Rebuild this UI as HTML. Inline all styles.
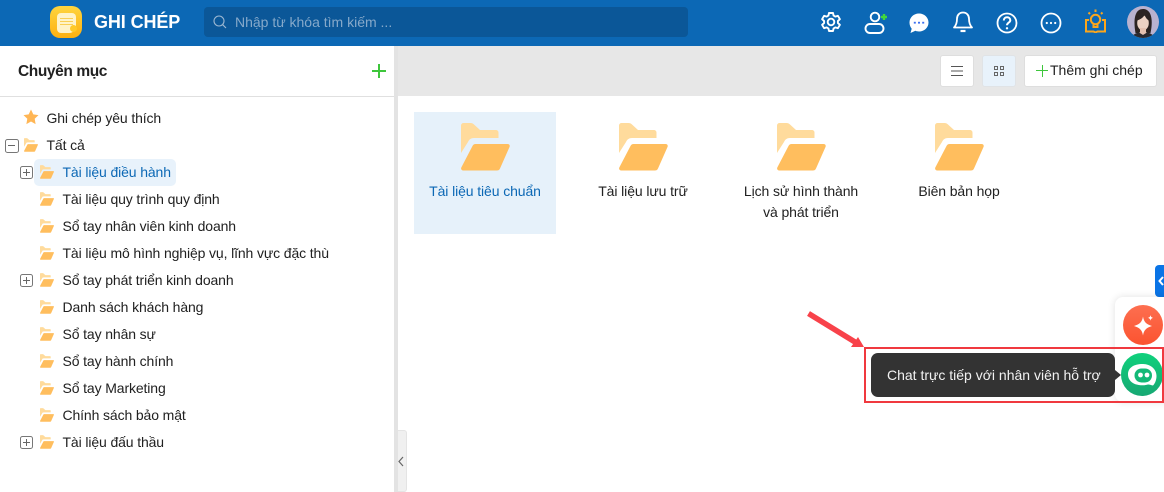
<!DOCTYPE html>
<html><head><meta charset="utf-8"><style>
*{box-sizing:border-box}
html,body{margin:0;padding:0}
body{width:1164px;height:492px;overflow:hidden;position:relative;background:#fff;font-family:"Liberation Sans","Noto Sans CJK SC",sans-serif;font-size:14px;color:#212121}
.a{position:absolute}
.t{position:absolute;white-space:nowrap;line-height:20px}
.l{letter-spacing:-.12px}
.c{position:absolute;text-align:center;line-height:21px;font-size:14px;color:#212121;letter-spacing:-.1px}
.b{position:absolute;width:13px;height:13px;border:1px solid #777;border-radius:2.5px}
.b:before{content:"";position:absolute;left:2px;top:5px;width:7px;height:1px;background:#666}
.p:after{content:"";position:absolute;left:5px;top:2px;width:1px;height:7px;background:#666}
</style></head><body>
<svg width="0" height="0" style="position:absolute"><defs>
<symbol id="f" viewBox="0 0 49 48"><path d="M0 2.500A2.500 2.500 0 0 1 2.500 0H9.500c1.500 0 2.500.5 3.500 1.500L19 7H35a2.500 2.500 0 0 1 2.500 2.500V15H13c-3 0-5 1.500-6 4L0 30Z" fill="#ffdb9c"/><path d="M11.500 23c.6-1.300 1.700-2 3-2H46.500c1.800 0 2.700 1.400 2 3L39 45.500c-.7 1.500-1.700 2-3.200 2H2.300C.6 47.500-.4 46 .3 44.500Z" fill="#ffbe5e"/></symbol>
</defs></svg>

<div class="a" style="left:0;top:0;width:1164px;height:46px;background:#0c68b5"></div>
<div class="a" style="left:50px;top:6px;width:32px;height:32px;border-radius:10px;background:linear-gradient(#ffd53f,#fdb010)"></div>
<div class="a" style="left:57px;top:13px;width:19px;height:20px;border-radius:4px 4px 7px 4px;background:#fff3c8"></div>
<div class="a" style="left:60px;top:18px;width:13px;height:1px;background:#f9cf55;box-shadow:0 3px #f9cf55,0 6px #f9cf55"></div>
<div class="a" style="left:70px;top:25px;width:7px;height:7px;border-radius:50%;background:#ffc928"></div>
<div class="t" style="left:94px;top:11px;color:#fff;font-size:18px;line-height:22px;font-weight:bold;letter-spacing:-.1px">GHI CHÉP</div>
<div class="a" style="left:204px;top:7px;width:484px;height:30px;border-radius:4px;background:#0b5798"></div>
<svg class="a" style="left:213px;top:15px" width="14" height="14" viewBox="0 0 14 14" fill="none" stroke="#9db8d2" stroke-width="1.100"><circle cx="6" cy="6" r="5"/><path d="M9.800 9.800L13 13"/></svg>
<div class="t" style="left:235px;top:12px;color:#86a9ca;font-size:14px">Nhập từ khóa tìm kiếm ...</div>

<svg class="a" style="left:820px;top:11px" width="22" height="22" viewBox="0 0 22 22" fill="none" stroke="#fff" stroke-width="1.900" stroke-linejoin="round"><path d="M9 2h4l.6 2.600 1.700 1 2.600-.8 2 3.400-2 1.800v2l2 1.800-2 3.400-2.600-.8-1.700 1-.6 2.600H9l-.6-2.600-1.700-1-2.600.8-2-3.400 2-1.800v-2l-2-1.800 2-3.400 2.600.8 1.700-1Z"/><circle cx="11" cy="11" r="3.300"/></svg>
<svg class="a" style="left:863px;top:10px" width="26" height="24" viewBox="0 0 26 24" fill="none"><circle cx="12" cy="7" r="4.300" stroke="#fff" stroke-width="1.900"/><rect x="2.500" y="14" width="18" height="9" rx="4.500" stroke="#fff" stroke-width="1.900"/><path d="M21 4v6M18 7h6" stroke="#41d63c" stroke-width="2.400"/></svg>
<svg class="a" style="left:908px;top:12px" width="22" height="23" viewBox="0 0 22 23"><path d="M11 1.500c5.400 0 9.500 4 9.500 9s-4.100 9-9.500 9c-1.300 0-2.500-.2-3.600-.7L2.500 21l1.200-4.300C2.300 15 1.500 12.900 1.500 10.500c0-5 4.100-9 9.500-9Z" fill="#fff"/><rect x="5.800" y="9.800" width="2" height="1.800" fill="#3b6ff0"/><rect x="10" y="9.800" width="2" height="1.800" fill="#3b6ff0"/><rect x="14.200" y="9.800" width="2" height="1.800" fill="#3b6ff0"/></svg>
<svg class="a" style="left:952px;top:11px" width="22" height="23" viewBox="0 0 22 23" fill="none" stroke="#fff" stroke-width="1.800" stroke-linejoin="round"><path d="M11 1.500c-3.800 0-6 2.800-6 6.300 0 5-1.300 7-3 8.700h18c-1.700-1.700-3-3.700-3-8.700 0-3.500-2.200-6.300-6-6.300Z"/><path d="M8.500 20h5" stroke-width="2.200"/></svg>
<svg class="a" style="left:996px;top:12px" width="22" height="22" viewBox="0 0 22 22" fill="none" stroke="#fff" stroke-width="1.800"><circle cx="11" cy="11" r="9.500"/><path d="M7.800 8.500c0-2 1.500-3.200 3.300-3.200s3.200 1.200 3.200 2.900c0 2.400-3.300 2.500-3.300 5" stroke-width="2"/><circle cx="11" cy="16.300" r="1.200" fill="#fff" stroke="none"/></svg>
<svg class="a" style="left:1040px;top:12px" width="22" height="22" viewBox="0 0 22 22" fill="none" stroke="#fff" stroke-width="1.800"><circle cx="11" cy="11" r="9.500"/><circle cx="6.800" cy="11" r="1.100" fill="#fff" stroke="none"/><circle cx="11" cy="11" r="1.100" fill="#fff" stroke="none"/><circle cx="15.200" cy="11" r="1.100" fill="#fff" stroke="none"/></svg>
<svg class="a" style="left:1085px;top:9px" width="21" height="24" viewBox="0 0 21 24" fill="none" stroke="#fba61c" stroke-width="2"><path d="M4 11H1v11.500h7.500l2 1 2-1H20V11h-3"/><circle cx="10.500" cy="10.500" r="4.700"/><path d="M8.500 15v3h4v-3M10.500 .5v2.500M3.500 3.500L5 5M17.500 3.500L16 5"/></svg>
<svg class="a" style="left:1127px;top:6px" width="32" height="32" viewBox="0 0 32 32"><defs><clipPath id="av"><circle cx="16" cy="16" r="16"/></clipPath></defs><g clip-path="url(#av)"><rect width="32" height="32" fill="#b9b2cf"/><path d="M8.500 27C6 13 8 3 16 3s10.500 10 7.500 24Z" fill="#2b2322"/><ellipse cx="16" cy="17" rx="5.800" ry="7.500" fill="#ecd2c4"/><path d="M10 14.500c3-1 6-2.500 7.500-5.500 1 2.500 2.500 4.500 4.500 5.500l-.5-7-5.500-2-5 2.500Z" fill="#2b2322"/><path d="M13 22h6v4l3 2.500H10l3-2.500Z" fill="#e4c1b0"/><path d="M4 32c1-3 5-5 8-5.500l4 2.500 4-2.500c3 .5 7 2.500 8 5.500Z" fill="#2a2a30"/></g></svg>

<!-- sidebar -->
<div class="t" style="left:18px;top:62px;font-size:15.500px;font-weight:bold;color:#212121;letter-spacing:-.4px">Chuyên mục</div>
<div class="a" style="left:372px;top:70px;width:14px;height:2px;background:#3ec63c"></div>
<div class="a" style="left:378px;top:64px;width:2px;height:14px;background:#3ec63c"></div>
<div class="a" style="left:0;top:96px;width:394px;height:1px;background:#e0e0e0"></div>
<div class="a" style="left:394px;top:46px;width:4px;height:446px;background:#e3e3e3"></div>
<div class="a" style="left:398px;top:46px;width:766px;height:50px;background:#e7e7e7"></div>

<svg class="a" style="left:23px;top:109px" width="16" height="16" viewBox="0 0 16 16"><path d="M8 .5l2.300 4.900 5.200.7-3.800 3.700.9 5.300L8 12.500l-4.600 2.600.9-5.300L.5 6.100l5.200-.7Z" fill="#ffb655"/></svg>
<div class="t l" style="left:46.500px;top:108px">Ghi chép yêu thích</div>

<div class="b" style="left:5px;top:139px;width:14px;height:14px"></div>
<svg class="a" style="left:24px;top:138px" width="14" height="14"><use href="#f"/></svg>
<div class="t l" style="left:46.500px;top:135px">Tất cả</div>

<div class="a" style="left:34px;top:159px;width:142px;height:27px;border-radius:5px;background:#e8f2fb"></div>
<div class="b p" style="left:20px;top:166px"></div>
<svg class="a" style="left:40px;top:165px" width="14" height="14"><use href="#f"/></svg>
<div class="t l" style="left:62.500px;top:162px;color:#0c68b5">Tài liệu điều hành</div>

<svg class="a" style="left:40px;top:192px" width="14" height="14"><use href="#f"/></svg>
<div class="t l" style="left:62.500px;top:189px">Tài liệu quy trình quy định</div>
<svg class="a" style="left:40px;top:219px" width="14" height="14"><use href="#f"/></svg>
<div class="t l" style="left:62.500px;top:216px">Sổ tay nhân viên kinh doanh</div>
<svg class="a" style="left:40px;top:246px" width="14" height="14"><use href="#f"/></svg>
<div class="t l" style="left:62.500px;top:243px">Tài liệu mô hình nghiệp vụ, lĩnh vực đặc thù</div>
<div class="b p" style="left:20px;top:274px"></div>
<svg class="a" style="left:40px;top:273px" width="14" height="14"><use href="#f"/></svg>
<div class="t l" style="left:62.500px;top:270px">Sổ tay phát triển kinh doanh</div>
<svg class="a" style="left:40px;top:300px" width="14" height="14"><use href="#f"/></svg>
<div class="t l" style="left:62.500px;top:297px">Danh sách khách hàng</div>
<svg class="a" style="left:40px;top:327px" width="14" height="14"><use href="#f"/></svg>
<div class="t l" style="left:62.500px;top:324px">Sổ tay nhân sự</div>
<svg class="a" style="left:40px;top:354px" width="14" height="14"><use href="#f"/></svg>
<div class="t l" style="left:62.500px;top:351px">Sổ tay hành chính</div>
<svg class="a" style="left:40px;top:381px" width="14" height="14"><use href="#f"/></svg>
<div class="t l" style="left:62.500px;top:378px">Sổ tay Marketing</div>
<svg class="a" style="left:40px;top:408px" width="14" height="14"><use href="#f"/></svg>
<div class="t l" style="left:62.500px;top:405px">Chính sách bảo mật</div>
<div class="b p" style="left:20px;top:436px"></div>
<svg class="a" style="left:40px;top:435px" width="14" height="14"><use href="#f"/></svg>
<div class="t l" style="left:62.500px;top:432px">Tài liệu đấu thầu</div>

<div class="a" style="left:398px;top:430px;width:9px;height:62px;background:#f0f0f0;border:1px solid #e4e4e4;border-left:0;border-radius:0 3px 3px 0"></div>
<svg class="a" style="left:397px;top:456px" width="8" height="11" viewBox="0 0 8 11" fill="none" stroke="#666" stroke-width="1.200"><path d="M6 1L2 5.500 6 10"/></svg>

<!-- toolbar -->
<div class="a" style="left:940px;top:55px;width:34px;height:32px;background:#fff;border:1px solid #dedede;border-radius:3px"></div>
<div class="a" style="left:951px;top:66px;width:12px;height:1px;background:#555;box-shadow:0 4.500px #555,0 9px #555"></div>
<div class="a" style="left:982px;top:55px;width:34px;height:32px;background:#e8f2fb;border:1px solid #e0e3e6;border-radius:3px"></div>
<svg class="a" style="left:994px;top:66px" width="10" height="10" fill="none" stroke="#666"><rect x=".5" y=".5" width="3" height="3"/><rect x="6.500" y=".5" width="3" height="3"/><rect x=".5" y="6.500" width="3" height="3"/><rect x="6.500" y="6.500" width="3" height="3"/></svg>
<div class="a" style="left:1024px;top:55px;width:133px;height:32px;background:#fff;border:1px solid #dedede;border-radius:3px"></div>
<div class="a" style="left:1036px;top:70px;width:12px;height:1px;background:#3ec63c"></div>
<div class="a" style="left:1041.500px;top:64.500px;width:1px;height:12px;background:#3ec63c"></div>
<div class="t" style="left:1050px;top:60px;color:#212121">Thêm ghi chép</div>

<!-- folders -->
<div class="a" style="left:414px;top:112px;width:142px;height:122px;background:#e6f1fa"></div>
<svg class="a" style="left:461px;top:123px" width="49" height="48"><use href="#f"/></svg>
<svg class="a" style="left:619px;top:123px" width="49" height="48"><use href="#f"/></svg>
<svg class="a" style="left:777px;top:123px" width="49" height="48"><use href="#f"/></svg>
<svg class="a" style="left:935px;top:123px" width="49" height="48"><use href="#f"/></svg>
<div class="c" style="left:414px;top:181px;width:142px;color:#0c68b5">Tài liệu tiêu chuẩn</div>
<div class="c" style="left:572px;top:181px;width:142px">Tài liệu lưu trữ</div>
<div class="c" style="left:730px;top:181px;width:142px">Lịch sử hình thành<br>và phát triển</div>
<div class="c" style="left:888px;top:181px;width:142px">Biên bản họp</div>

<!-- right widgets -->
<div class="a" style="left:1155px;top:265px;width:15px;height:32px;background:#0a74e6;border-radius:4px 0 0 4px"></div>
<svg class="a" style="left:1158px;top:276px" width="6" height="10" fill="none" stroke="#fff" stroke-width="2"><path d="M5 1L1.500 5 5 9"/></svg>
<div class="a" style="left:1115px;top:297px;width:60px;height:105px;background:#fff;border-radius:8px 0 0 8px;box-shadow:0 0 8px rgba(0,0,0,.12)"></div>
<div class="a" style="left:1123px;top:305px;width:40px;height:40px;border-radius:50%;background:linear-gradient(#fd6f50,#fb5330)"></div>
<svg class="a" style="left:1133px;top:315px" width="22" height="22" viewBox="0 0 22 22" fill="#fff"><path d="M10 1.500c.9 5.500 3 7.500 9 9.500-6 2-8.100 4-9 9.500-.9-5.500-3-7.500-9-9.500 6-2 8.100-4 9-9.500Z"/><path d="M17.500 0c.3 1.800 1 2.500 2.700 2.900-1.700.4-2.400 1.100-2.700 2.900-.3-1.800-1-2.500-2.700-2.900C16.500 2.500 17.200 1.800 17.500 0Z"/></svg>
<div class="a" style="left:1121px;top:353px;width:42px;height:43px;border-radius:50%;background:linear-gradient(#0fd17c,#17a873)"></div>
<svg class="a" style="left:1127px;top:362px" width="32" height="30" viewBox="0 0 32 30"><path d="M15.500 2c8 0 14 5 14 12 0 4-1.500 7.500-3.500 9.500-2-.3-3.500-1.200-5-1-1.500.5-3.500.8-5.500.8-8.500 0-14.500-4-14.500-11S7.500 2 15.500 2Z" fill="#fff"/><rect x="7.500" y="6.500" width="17.500" height="14" rx="7" fill="#13b977"/><circle cx="13.500" cy="13" r="2.400" fill="#fff"/><circle cx="20" cy="13" r="2.400" fill="#fff"/></svg>
<div class="a" style="left:871px;top:353px;width:244px;height:44px;background:#333;border-radius:7px"></div>
<div class="a" style="left:1115px;top:370px;width:0;height:0;border-left:6px solid #333;border-top:5px solid transparent;border-bottom:5px solid transparent"></div>
<div class="t" style="left:887px;top:365px;color:#f2f2f2;font-size:14px">Chat trực tiếp với nhân viên hỗ trợ</div>

<!-- annotation -->
<div class="a" style="left:864px;top:347px;width:300px;height:56px;border:2px solid #f0393f"></div>
<svg class="a" style="left:800px;top:305px" width="70" height="46" viewBox="0 0 70 46"><path d="M8.500 8.500L55 37" stroke="#f8424a" stroke-width="5.500"/><path d="M64 42L51 42 58 32Z" fill="#f8424a"/></svg>
</body></html>
